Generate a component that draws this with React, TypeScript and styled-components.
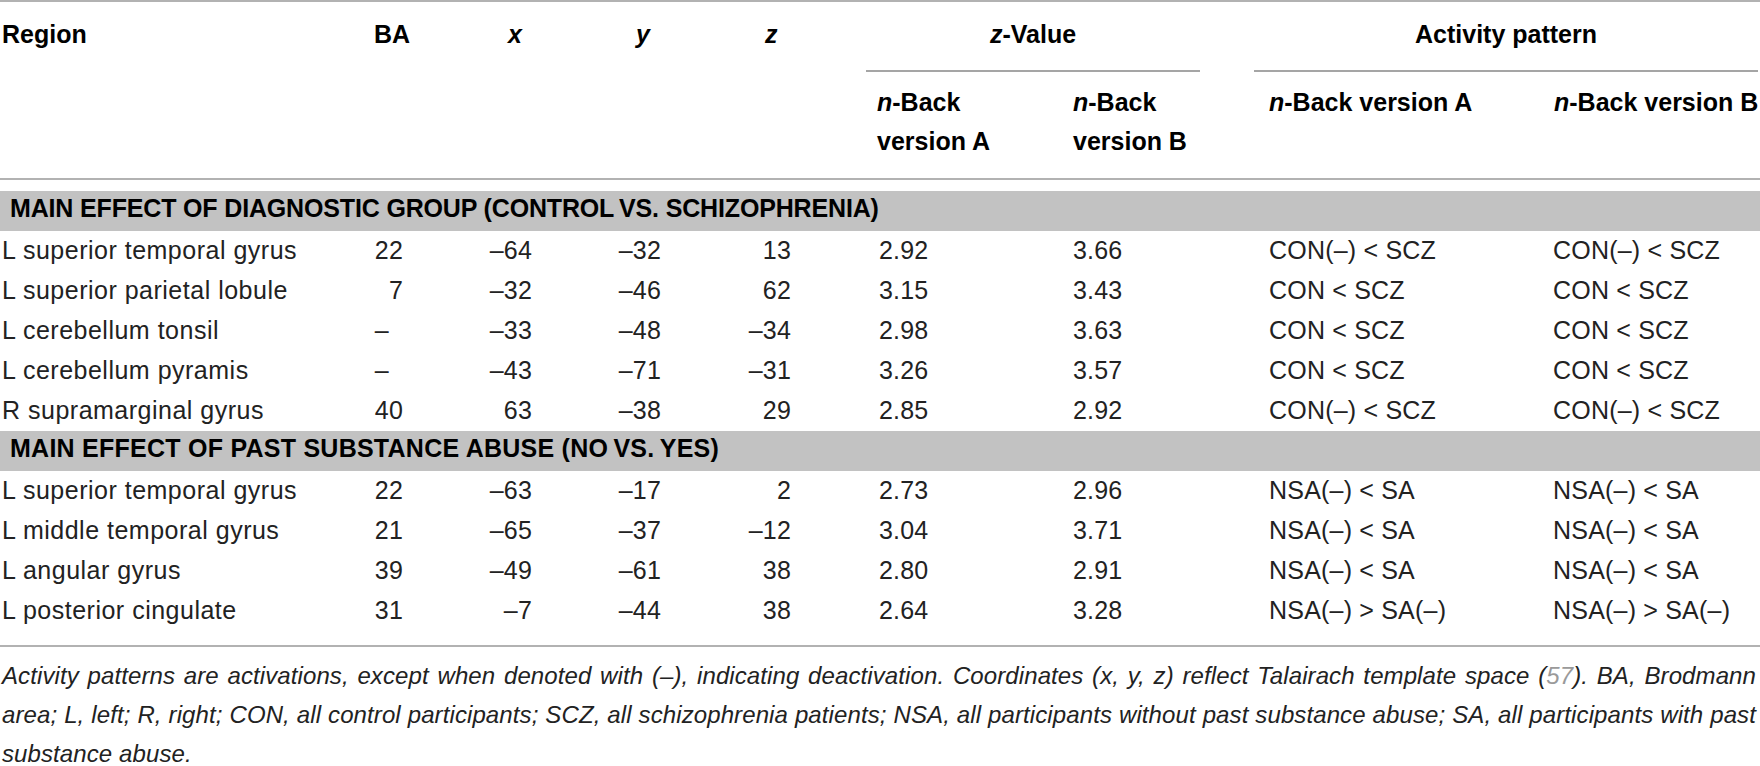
import React from "react";
import styled, { createGlobalStyle } from "styled-components";

const COLS = "345px 65px 130px 129px 197px 194px 194px 286px 220px";
const RULE = "#b2b2b2";

const GlobalStyle = createGlobalStyle`
  html, body { margin: 0; padding: 0; background: #ffffff; }
  body {
    font-family: "Liberation Sans", Arial, Helvetica, sans-serif;
    color: #1a1a1a;
  }
`;

const Page = styled.div`
  width: 1760px;
`;

const Table = styled.div`
  border-top: 2px solid ${RULE};
  border-bottom: 2px solid ${RULE};
  padding-bottom: 14px;
`;

const Head = styled.div`
  display: grid;
  grid-template-columns: ${COLS};
  border-bottom: 2px solid ${RULE};
  margin-bottom: 11px;
  font-weight: 700;
  font-size: 25px;
  color: #000;
  white-space: nowrap;
`;

const TopCell = styled.div<{ $pl?: number; $span?: number; $rule?: boolean; $mr?: number }>`
  grid-column: span ${(p) => p.$span ?? 1};
  padding: 13px 0 17px ${(p) => p.$pl ?? 0}px;
  margin-right: ${(p) => p.$mr ?? 0}px;
  line-height: 38px;
  text-align: ${(p) => (p.$rule ? "center" : "left")};
  border-bottom: 2px solid ${(p) => (p.$rule ? "#a5a5a5" : "transparent")};
`;

const SubCell = styled.div<{ $pl?: number }>`
  padding: 11px 0 17px ${(p) => p.$pl ?? 0}px;
  line-height: 39px;
`;

const Band = styled.div<{ $track: number }>`
  height: 40px;
  box-sizing: border-box;
  background: #c2c2c2;
  padding: 0 0 6px 10px;
  line-height: 34px;
  font-size: 25px;
  font-weight: 700;
  letter-spacing: ${(p) => p.$track}px;
  color: #000;
  white-space: nowrap;
`;

const Row = styled.div`
  display: grid;
  grid-template-columns: ${COLS};
  height: 40px;
`;

const Cell = styled.div<{ $right?: boolean; $pl?: number; $pr?: number; $track?: number }>`
  box-sizing: border-box;
  padding: 0 ${(p) => p.$pr ?? 0}px 2px ${(p) => p.$pl ?? 0}px;
  line-height: 38px;
  font-size: 25px;
  letter-spacing: ${(p) => p.$track ?? 0.2}px;
  color: #222;
  text-align: ${(p) => (p.$right ? "right" : "left")};
  white-space: nowrap;
`;

const Note = styled.div`
  margin: 9px 0 0 2px;
  width: 1754px;
  font-size: 24px;
  line-height: 39px;
  letter-spacing: 0.1px;
  font-style: italic;
  color: #222;
`;

const NoteLine = styled.span<{ $fill?: boolean }>`
  display: block;
  white-space: nowrap;
  text-align: ${(p) => (p.$fill ? "justify" : "left")};
  text-align-last: ${(p) => (p.$fill ? "justify" : "left")};
`;

const Ref = styled.span`
  color: #9a9a9a;
`;

type DataRow = [string, string, string, string, string, string, string, string, string];

const groups: { title: string; track: number; rows: DataRow[] }[] = [
  {
    title: "MAIN EFFECT OF DIAGNOSTIC GROUP (CONTROL\u2009VS. SCHIZOPHRENIA)",
    track: -0.16,
    rows: [
      ["L superior temporal gyrus", "22", "–64", "–32", "13", "2.92", "3.66", "CON(–) < SCZ", "CON(–) < SCZ"],
      ["L superior parietal lobule", "7", "–32", "–46", "62", "3.15", "3.43", "CON < SCZ", "CON < SCZ"],
      ["L cerebellum tonsil", "–\u2007", "–33", "–48", "–34", "2.98", "3.63", "CON < SCZ", "CON < SCZ"],
      ["L cerebellum pyramis", "–\u2007", "–43", "–71", "–31", "3.26", "3.57", "CON < SCZ", "CON < SCZ"],
      ["R supramarginal gyrus", "40", "63", "–38", "29", "2.85", "2.92", "CON(–) < SCZ", "CON(–) < SCZ"],
    ],
  },
  {
    title: "MAIN EFFECT OF PAST SUBSTANCE ABUSE (NO\u2009VS.\u2009YES)",
    track: 0.25,
    rows: [
      ["L superior temporal gyrus", "22", "–63", "–17", "2", "2.73", "2.96", "NSA(–) < SA", "NSA(–) < SA"],
      ["L middle temporal gyrus", "21", "–65", "–37", "–12", "3.04", "3.71", "NSA(–) < SA", "NSA(–) < SA"],
      ["L angular gyrus", "39", "–49", "–61", "38", "2.80", "2.91", "NSA(–) < SA", "NSA(–) < SA"],
      ["L posterior cingulate", "31", "–7", "–44", "38", "2.64", "3.28", "NSA(–) > SA(–)", "NSA(–) > SA(–)"],
    ],
  },
];

const cellProps: { right?: boolean; pl?: number; pr?: number; track?: number }[] = [
  { pl: 2, track: 0.5 },
  { right: true, pr: 7 },
  { right: true, pr: 8 },
  { right: true, pr: 8 },
  { right: true, pr: 75 },
  { pl: 13 },
  { pl: 13 },
  { pl: 15 },
  { pl: 13 },
];

export default function App() {
  return (
    <Page>
      <GlobalStyle />
      <Table>
        <Head>
          <TopCell $pl={2}>Region</TopCell>
          <TopCell $pl={29}>BA</TopCell>
          <TopCell $pl={98}><em>x</em></TopCell>
          <TopCell $pl={96}><em>y</em></TopCell>
          <TopCell $pl={96}><em>z</em></TopCell>
          <TopCell $span={2} $rule $mr={54}><em>z</em>-Value</TopCell>
          <TopCell $span={2} $rule $mr={2}>Activity pattern</TopCell>

          <SubCell />
          <SubCell />
          <SubCell />
          <SubCell />
          <SubCell />
          <SubCell $pl={11}><em>n</em>-Back<br />version A</SubCell>
          <SubCell $pl={13}><em>n</em>-Back<br />version B</SubCell>
          <SubCell $pl={15}><em>n</em>-Back version A</SubCell>
          <SubCell $pl={14}><em>n</em>-Back version B</SubCell>
        </Head>
        {groups.map((g) => (
          <React.Fragment key={g.title}>
            <Band $track={g.track}>{g.title}</Band>
            {g.rows.map((r, i) => (
              <Row key={i}>
                {r.map((v, j) => (
                  <Cell
                    key={j}
                    $right={cellProps[j].right}
                    $pl={cellProps[j].pl}
                    $pr={cellProps[j].pr}
                    $track={cellProps[j].track}
                  >
                    {v}
                  </Cell>
                ))}
              </Row>
            ))}
          </React.Fragment>
        ))}
      </Table>
      <Note>
        <NoteLine $fill>
          Activity patterns are activations, except when denoted with (–), indicating deactivation. Coordinates (x, y, z) reflect Talairach template space (<Ref>57</Ref>). BA, Brodmann
        </NoteLine>
        <NoteLine $fill>
          area; L, left; R, right; CON, all control participants; SCZ, all schizophrenia patients; NSA, all participants without past substance abuse; SA, all participants with past
        </NoteLine>
        <NoteLine>substance abuse.</NoteLine>
      </Note>
    </Page>
  );
}
